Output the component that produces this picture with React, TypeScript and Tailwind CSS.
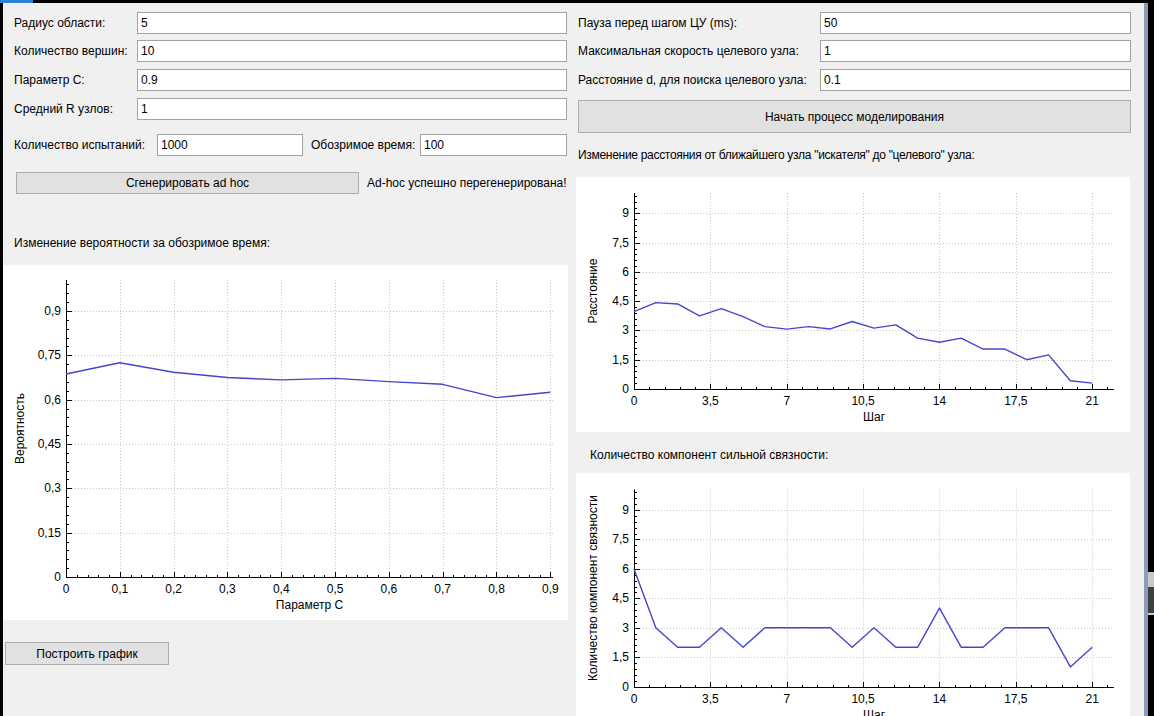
import React from "react";

type Pt = [number, number];

type ChartProps = {
  w: number;
  h: number;
  left: number;
  right: number;
  top: number;
  bottom: number;
  xMax: number;
  yMax: number;
  xStep: number;
  yStep: number;
  xLast: number;
  yLast: number;
  data: Pt[];
  xTitle: string;
  yTitle: string;
};

const fmt = (v: number) => String(Math.round(v * 100) / 100).replace(".", ",");
const crisp = (v: number) => Math.round(v) + 0.5;

function range(step: number, max: number) {
  const out: number[] = [];
  for (let i = 0; i * step <= max + 1e-9; i++) out.push(i * step);
  return out;
}

function Chart({ w, h, left, right, top, bottom, xMax, yMax, xStep, yStep, xLast, yLast, data, xTitle, yTitle }: ChartProps) {
  const sx = (v: number) => left + (v / xMax) * (right - left);
  const sy = (v: number) => bottom - (v / yMax) * (bottom - top);
  const xMajor = range(xStep, xLast);
  const yMajor = range(yStep, yLast);
  const xMinor = range(xStep / 5, xMax);
  const yMinor = range(yStep / 5, yMax);
  const ax = crisp(left);
  const ay = crisp(bottom);

  return (
    <svg width={w} height={h} className="block font-['Liberation_Sans',Arial,sans-serif] text-[12px]">
      {/* grid */}
      {xMajor.slice(1).map((v) => (
        <line key={"gx" + v} x1={crisp(sx(v))} x2={crisp(sx(v))} y1={top} y2={bottom} stroke="#c8c8c8" strokeDasharray="1 2" />
      ))}
      {yMajor.slice(1).map((v) => (
        <line key={"gy" + v} x1={left} x2={right} y1={crisp(sy(v))} y2={crisp(sy(v))} stroke="#c8c8c8" strokeDasharray="1 2" />
      ))}

      {/* axes */}
      <line x1={ax} x2={ax} y1={top} y2={ay} stroke="#000" />
      <line x1={ax} x2={right} y1={ay} y2={ay} stroke="#000" />

      {xMinor.map((v) => (
        <line key={"tx" + v} x1={crisp(sx(v))} x2={crisp(sx(v))} y1={ay} y2={ay - 2.5} stroke="#000" />
      ))}
      {xMajor.map((v) => (
        <line key={"Tx" + v} x1={crisp(sx(v))} x2={crisp(sx(v))} y1={ay} y2={ay - 5.5} stroke="#000" />
      ))}
      {yMinor.map((v) => (
        <line key={"ty" + v} x1={ax} x2={ax + 2.5} y1={crisp(sy(v))} y2={crisp(sy(v))} stroke="#000" />
      ))}
      {yMajor.map((v) => (
        <line key={"Ty" + v} x1={ax} x2={ax + 5.5} y1={crisp(sy(v))} y2={crisp(sy(v))} stroke="#000" />
      ))}

      {/* labels */}
      {xMajor.map((v) => (
        <text key={"lx" + v} x={sx(v)} y={bottom + 12} textAnchor="middle" dominantBaseline="central" fill="#000">
          {fmt(v)}
        </text>
      ))}
      {yMajor.map((v) => (
        <text key={"ly" + v} x={left - 5} y={sy(v)} textAnchor="end" dominantBaseline="central" fill="#000">
          {fmt(v)}
        </text>
      ))}
      <text x={(left + right) / 2} y={bottom + 28} textAnchor="middle" dominantBaseline="central" fill="#000">
        {xTitle}
      </text>
      <text
        x={17}
        y={(top + bottom) / 2}
        textAnchor="middle"
        dominantBaseline="central"
        fill="#000"
        transform={`rotate(-90 17 ${(top + bottom) / 2})`}
      >
        {yTitle}
      </text>

      <polyline
        points={data.map(([x, y]) => `${sx(x)},${sy(y)}`).join(" ")}
        fill="none"
        stroke="#4646cc"
        strokeWidth={1.4}
        strokeLinejoin="round"
      />
    </svg>
  );
}

const probability: Pt[] = [
  [0, 0.687], [0.1, 0.725], [0.2, 0.693], [0.3, 0.675], [0.4, 0.667],
  [0.5, 0.672], [0.6, 0.661], [0.7, 0.652], [0.8, 0.607], [0.9, 0.625],
];

const distance: Pt[] = [3.97, 4.43, 4.36, 3.75, 4.12, 3.71, 3.2, 3.07, 3.2, 3.08, 3.46, 3.12, 3.29, 2.61, 2.4, 2.61, 2.05, 2.05, 1.5, 1.75, 0.42, 0.3].map(
  (v, i) => [i, v] as Pt
);

const components: Pt[] = [6, 3, 2, 2, 3, 2, 3, 3, 3, 3, 2, 3, 2, 2, 4, 2, 2, 3, 3, 3, 1, 2].map((v, i) => [i, v] as Pt);

function Field({ value, className = "" }: { value: string; className?: string }) {
  return (
    <input
      readOnly
      value={value}
      className={`h-[22px] border border-[#a3a3a3] bg-white px-[3px] text-[12px] text-black outline-none ${className}`}
    />
  );
}

function Button({ children, className = "" }: { children: React.ReactNode; className?: string }) {
  return (
    <button className={`flex items-center justify-center border border-[#adadad] bg-[#e1e1e1] text-[12px] text-black ${className}`}>
      {children}
    </button>
  );
}

function Row({ label, value, labelW, className = "" }: { label: string; value: string; labelW: string; className?: string }) {
  return (
    <div className={`flex h-[22px] items-center ${className}`}>
      <span className={`${labelW} shrink-0 whitespace-nowrap`}>{label}</span>
      <Field value={value} className="min-w-0 flex-1" />
    </div>
  );
}

export default function App() {
  return (
    <div className="flex h-[716px] w-[1154px] flex-col overflow-hidden bg-black font-['Liberation_Sans',Arial,sans-serif] text-[12px] leading-[14px] text-black">
      <div className="flex h-[3px] shrink-0">
        <div className="w-[33px] bg-[#2f7fd6]" />
      </div>
      <div className="flex min-h-0 flex-1">
        <div className="w-[3px] shrink-0" />
        <div className="flex w-[1141px] shrink-0 bg-[#f0f0f0]">
          {/* left column */}
          <div className="flex w-[565px] shrink-0 flex-col">
            <div className="flex flex-col pl-[11px] pr-[1px] pt-[9px]">
              <Row label="Радиус области:" value="5" labelW="w-[123px]" />
              <Row label="Количество вершин:" value="10" labelW="w-[123px]" className="mt-[6px]" />
              <Row label="Параметр C:" value="0.9" labelW="w-[123px]" className="mt-[7px]" />
              <Row label="Средний R узлов:" value="1" labelW="w-[123px]" className="mt-[7px]" />
              <div className="mt-[14px] flex h-[22px] items-center">
                <span className="w-[143px] shrink-0 whitespace-nowrap">Количество испытаний:</span>
                <Field value="1000" className="w-[146px] shrink-0" />
                <span className="ml-[8px] w-[109px] shrink-0 whitespace-nowrap">Обозримое время:</span>
                <Field value="100" className="min-w-0 flex-1" />
              </div>
              <div className="mt-[16px] flex h-[22px] items-center">
                <Button className="ml-[2px] h-[22px] w-[343px] shrink-0">Сгенерировать ad hoc</Button>
                <span className="ml-[8px] whitespace-nowrap">Ad-hoc успешно перегенерирована!</span>
              </div>
              <div className="mt-[42px] h-[14px] whitespace-nowrap">Изменение вероятности за обозримое время:</div>
            </div>
            <div className="mt-[15px] h-[355px] w-[565px] bg-white">
              <Chart
                w={565}
                h={355}
                left={63}
                right={550}
                top={15}
                bottom={312}
                xMax={0.905}
                yMax={1.005}
                xStep={0.1}
                yStep={0.15}
                xLast={0.9}
                yLast={0.9}
                data={probability}
                xTitle="Параметр C"
                yTitle="Вероятность"
              />
            </div>
            <Button className="ml-[2px] mt-[22px] h-[23px] w-[164px]">Построить график</Button>
          </div>

          <div className="w-[8px] shrink-0" />

          {/* right column */}
          <div className="flex w-[555px] shrink-0 flex-col">
            <div className="flex flex-col pl-[2px] pt-[9px]">
              <Row label="Пауза перед шагом ЦУ (ms):" value="50" labelW="w-[242px]" />
              <Row label="Максимальная скорость целевого узла:" value="1" labelW="w-[242px]" className="mt-[6px]" />
              <Row label="Расстояние d, для поиска целевого узла:" value="0.1" labelW="w-[242px]" className="mt-[7px]" />
              <Button className="mt-[9px] h-[33px] w-[553px]">Начать процесс моделирования</Button>
              <div className="mt-[15px] h-[14px] whitespace-nowrap tracking-[-0.3px]">
                Изменение расстояния от ближайшего узла "искателя" до "целевого" узла:
              </div>
            </div>
            <div className="mt-[15px] h-[255px] w-[554px] shrink-0 bg-white">
              <Chart
                w={554}
                h={255}
                left={58}
                right={538}
                top={16}
                bottom={212}
                xMax={22}
                yMax={10.05}
                xStep={3.5}
                yStep={1.5}
                xLast={21}
                yLast={9}
                data={distance}
                xTitle="Шаг"
                yTitle="Расстояние"
              />
            </div>
            <div className="mt-[16px] h-[14px] whitespace-nowrap pl-[14px]">Количество компонент сильной связности:</div>
            <div className="mt-[11px] h-[243px] w-[554px] shrink-0 bg-white">
              <Chart
                w={554}
                h={243}
                left={58}
                right={538}
                top={16.5}
                bottom={213.5}
                xMax={22}
                yMax={10.05}
                xStep={3.5}
                yStep={1.5}
                xLast={21}
                yLast={9}
                data={components}
                xTitle="Шаг"
                yTitle="Количество компонент связности"
              />
            </div>
          </div>
        </div>
        <div className="w-[4px] shrink-0 bg-[#8d9cb2]" />
        <div className="flex flex-1 flex-col">
          <div className="mt-[569px] h-[43px] bg-[#c9c9c9] pt-[15px]">
            <div className="h-[26px] bg-[#3b4046]" />
          </div>
        </div>
      </div>
    </div>
  );
}
